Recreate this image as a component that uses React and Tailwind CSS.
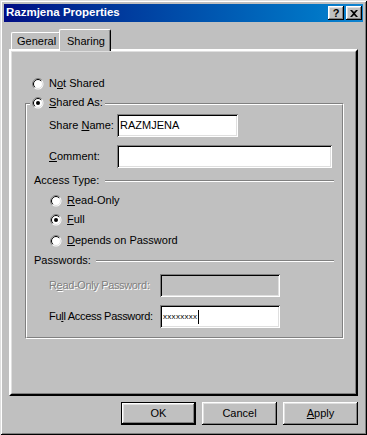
import React from "react";

const raised =
  "shadow-[inset_-1px_-1px_#000,inset_1px_1px_#fff,inset_-2px_-2px_#808080,inset_2px_2px_#dfdfdf]";
const sunken =
  "shadow-[inset_1px_1px_#808080,inset_-1px_-1px_#fff,inset_2px_2px_#000,inset_-2px_-2px_#dfdfdf]";

function Radio({ checked }) {
  return (
    <svg width="12" height="12" viewBox="0 0 12 12" className="shrink-0">
      <circle cx="6" cy="6" r="5.5" fill="#fff" />
      <path d="M2.1 9.9 A5.5 5.5 0 0 1 9.9 2.1" fill="none" stroke="#808080" strokeWidth="1" />
      <circle cx="6" cy="6" r="4.5" fill="#fff" stroke="#dfdfdf" strokeWidth="1" />
      <path d="M2.8 9.2 A4.5 4.5 0 0 1 9.2 2.8" fill="none" stroke="#000" strokeWidth="1" />
      {checked && <circle cx="6" cy="6" r="2" fill="#000" />}
    </svg>
  );
}

function RadioRow({ checked, children, className = "" }) {
  return (
    <div className={`flex h-[13px] items-center gap-[5px] ${className}`}>
      <Radio checked={checked} />
      <span className="leading-[13px]">{children}</span>
    </div>
  );
}

function Etched({ className = "" }) {
  return <div className={`h-[2px] border-t border-b border-t-[#808080] border-b-white ${className}`} />;
}

function Button({ children, isDefault }) {
  return (
    <div
      className={`flex h-[23px] w-[75px] items-center justify-center bg-[#c0c0c0] ${
        isDefault
          ? "shadow-[inset_0_0_0_1px_#000,inset_-2px_-2px_#000,inset_2px_2px_#fff,inset_-3px_-3px_#808080,inset_3px_3px_#dfdfdf]"
          : raised
      }`}
    >
      {children}
    </div>
  );
}

export default function App() {
  return (
    <div
      className={`h-[435px] w-[367px] bg-[#c0c0c0] p-[4px] font-['Liberation_Sans',Arial,sans-serif] text-[11px] text-black shadow-[inset_1px_1px_#dfdfdf,inset_-1px_-1px_#000,inset_2px_2px_#fff,inset_-2px_-2px_#808080]`}
    >
      {/* title bar */}
      <div className="flex h-[18px] items-center justify-between bg-gradient-to-r from-[#000a84] to-[#1084d0] pl-[2px] pr-[1px]">
        <span className="text-[11.5px] font-bold text-white">Razmjena Properties</span>
        <div className="flex gap-[2px]">
          <div className={`flex h-[14px] w-[16px] items-center justify-center bg-[#c0c0c0] text-[11px] font-bold leading-none text-black ${raised}`}>
            ?
          </div>
          <div className={`flex h-[14px] w-[16px] items-center justify-center bg-[#c0c0c0] ${raised}`}>
            <svg width="8" height="7" viewBox="0 0 8 7">
              <path d="M0 0 L2 0 L4 2 L6 0 L8 0 L5 3.5 L8 7 L6 7 L4 5 L2 7 L0 7 L3 3.5 Z" fill="#000" />
            </svg>
          </div>
        </div>
      </div>

      {/* tabs */}
      <div className="ml-[5px] mt-[7px] flex h-[20px] items-end">
        <div className="ml-[2px] flex h-[17px] w-[50px] items-center rounded-t-[2px] border-l border-t border-l-white border-t-white border-r border-r-black pl-[5px] shadow-[inset_-1px_0_#808080]">
          General
        </div>
        <div className="relative z-10 -mb-[2px] -ml-[2px] flex h-[22px] w-[52px] items-start rounded-t-[2px] border-l border-t border-l-white border-t-white border-r border-r-black bg-[#c0c0c0] pl-[7px] pt-[3px] shadow-[inset_-1px_0_#808080]">
          Sharing
        </div>
      </div>

      {/* panel */}
      <div className="ml-[5px] h-[347px] w-[349px] border-2 border-t-white border-l-white border-r-black border-b-black">
        <div className="h-full w-full border-t border-l border-r border-b border-t-[#dfdfdf] border-l-[#dfdfdf] border-r-[#808080] border-b-[#808080]">
          <div className="-ml-px -mt-px pl-[21px] pt-[26px]">
            <RadioRow>
              N<u>o</u>t Shared
            </RadioRow>
          </div>

          {/* group box */}
          <div className="ml-[13px] mt-[13px] h-[236px] w-[319px] border border-t-[#808080] border-l-[#808080] border-r-white border-b-white">
            <div className="h-full border border-t-white border-l-white border-r-[#808080] border-b-[#808080]">
              <div className="-mt-[9px] ml-[3px] w-fit bg-[#c0c0c0] px-[2px]">
                <RadioRow checked>
                  <u>S</u>hared As:
                </RadioRow>
              </div>

              <div className="mt-[5px] flex h-[23px] items-center pl-[22px]">
                <span className="w-[68px]">
                  Share <u>N</u>ame:
                </span>
                <div className={`flex h-[23px] w-[121px] items-center bg-white pl-[3px] ${sunken}`}>RAZMJENA</div>
              </div>

              <div className="mt-[8px] flex h-[23px] items-center pl-[22px]">
                <span className="w-[68px]">
                  <u>C</u>omment:
                </span>
                <div className={`h-[23px] w-[215px] bg-white ${sunken}`} />
              </div>

              <div className="mt-[6px] flex h-[13px] items-center pl-[7px] pr-[8px]">
                <span>Access Type:</span>
                <Etched className="ml-[6px] flex-1" />
              </div>

              <div className="pl-[23px]">
                <RadioRow className="mt-[7px]">
                  <u>R</u>ead-Only
                </RadioRow>
                <RadioRow checked className="mt-[6px]">
                  <u>F</u>ull
                </RadioRow>
                <RadioRow className="mt-[8px]">
                  <u>D</u>epends on Password
                </RadioRow>
              </div>

              <div className="mt-[7px] flex h-[13px] items-center pl-[7px] pr-[8px]">
                <span>Passwords:</span>
                <Etched className="ml-[5px] flex-1" />
              </div>

              <div className="mt-[7px] flex h-[23px] items-center pl-[22px]">
                <span className="w-[111px] tracking-[-0.35px] text-[#808080] [text-shadow:1px_1px_0_#fff]">
                  R<u>e</u>ad-Only Password:
                </span>
                <div className={`h-[23px] w-[120px] bg-[#c0c0c0] ${sunken}`} />
              </div>

              <div className="mt-[8px] flex h-[23px] items-center pl-[22px]">
                <span className="w-[111px] tracking-[-0.3px]">
                  Fu<u>l</u>l Access Password:
                </span>
                <div className={`flex h-[23px] w-[120px] items-center bg-white pl-[3px] ${sunken}`}>
                  <span className="text-[8px] leading-none tracking-[0.3px]">xxxxxxxx</span>
                  <span className="ml-px h-[14px] w-px bg-black" />
                </div>
              </div>
            </div>
          </div>
        </div>
      </div>

      {/* buttons */}
      <div className="ml-[5px] mt-[6px] flex w-[349px] justify-end gap-[6px]">
        <Button isDefault>OK</Button>
        <Button>Cancel</Button>
        <Button>
          <span>
            <u>A</u>pply
          </span>
        </Button>
      </div>
    </div>
  );
}
